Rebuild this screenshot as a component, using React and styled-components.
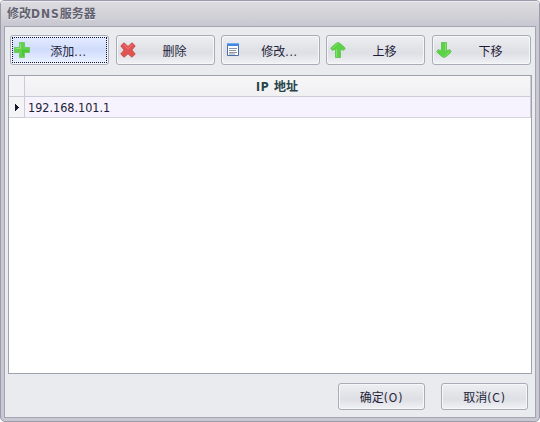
import React from "react";
import styled, { createGlobalStyle } from "styled-components";

const GlobalStyle = createGlobalStyle`
  *, *::before, *::after { box-sizing: border-box; }
  body {
    margin: 0;
    overflow: hidden;
    background: #fff;
    color: #1e1e38;
    font: 12px/16px "DejaVu Sans Condensed", "Noto Sans CJK SC", sans-serif;
  }
`;

const Dialog = styled.div`
  width: 540px;
  height: 422px;
  display: flex;
  flex-direction: column;
  border: 1px solid #9c9ba9;
  border-radius: 4px 4px 5px 5px;
  background: #c8c7d2;
  padding: 0 3px 3px;
`;

const TitleBar = styled.header`
  height: 25px;
  flex: none;
  margin: 0 -3px;
  padding: 5px 6px 0;
  border-radius: 3px 3px 0 0;
  background: linear-gradient(#dddde1, #d3d3d8 50%, #c8c7d2);
  box-shadow: inset 0 1px #ececf0;
  color: #62616f;
  font-weight: bold;
  text-shadow: 0 1px #e8e8ed;
  white-space: nowrap;
`;

const Latin = styled.span`
  letter-spacing: ${(p) => p.$spacing}px;
`;

const Client = styled.main`
  flex: 1;
  display: flex;
  flex-direction: column;
  border: 1px solid #a5a4b1;
  background: #eaebef;
  padding: 8px 3px 7px;
`;

const Toolbar = styled.div`
  display: grid;
  grid-template-columns: 106px 105px 105px 106px 99px;
  padding-left: 2px;
  margin-bottom: 10px;
`;

const Button = styled.button`
  width: ${(p) => p.$width}px;
  height: ${(p) => p.$height}px;
  padding: 1px;
  border: 1px solid #a9abb6;
  border-radius: 3px;
  background: ${(p) =>
    p.$focused
      ? "linear-gradient(#e6edff, #d0dcfb 48%, #d9e3ff 65%, #edf3ff)"
      : "linear-gradient(#eeeff2, #e1e2e7 48%, #dfe0e6 62%, #f1f2f5)"};
  box-shadow: inset 0 0 0 1px #f6f7f9;
  color: inherit;
  font: inherit;
`;

const ButtonContent = styled.span`
  width: 100%;
  height: 100%;
  display: flex;
  align-items: center;
  border: 1px dotted ${(p) => (p.$focused ? "#101035" : "transparent")};
`;

const Caption = styled.span`
  flex: 1;
  text-align: center;
  white-space: nowrap;
  padding: 4px 1px 0 0;
`;

const Icon = styled.svg`
  width: 16px;
  height: 16px;
  flex: none;
  margin-left: 1px;
  margin-right: 2px;
`;

const Grid = styled.div`
  height: 299px;
  border: 1px solid #a0a1ae;
  background: #fff;
`;

const GridRow = styled.div`
  display: grid;
  grid-template-columns: 16px 1fr;
  grid-template-rows: 21px;
  height: 21px;
  border-right: 1px solid #cbccd6;
`;

const Indicator = styled.div`
  display: flex;
  align-items: center;
  padding-left: 6px;
  border-right: 1px solid #cbccd6;
  border-bottom: 1px solid #cbccd6;
  background: #f4f4f6;
`;

const Arrow = styled.svg`
  width: 4px;
  height: 7px;
`;

const HeaderCell = styled.div`
  border-bottom: 1px solid #cbccd6;
  background: linear-gradient(#f7f7f8, #f0f0f3);
  color: #254548;
  font-weight: bold;
  text-align: center;
  line-height: 20px;
  padding: 1px 1px 0 0;
`;

const Cell = styled.div`
  border-bottom: 1px solid #d5d5de;
  background: #f6f3fe;
  padding: 1px 3px 0;
  line-height: 20px;
  font-size: 12.5px;
`;

const Footer = styled.footer`
  display: flex;
  justify-content: flex-end;
  gap: 16px;
  padding: 9px 4px 0 0;
`;

const FooterCaption = styled.span`
  display: block;
  padding-top: 2px;
`;

const AddIcon = () => (
  <Icon viewBox="0 0 16 16">
    <path d="M5.5.5h5v5h5v5h-5v5h-5v-5h-5v-5h5z" fill="#5fd048" stroke="#6fca5f" strokeLinejoin="round" />
    <path d="M6.5 1.5v5h-5" fill="none" stroke="#8be578" />
    <path d="M8 8h7v2H8zM8 8h2v6H8z" fill="#4fc638" />
  </Icon>
);

const DeleteIcon = () => (
  <Icon viewBox="0 0 16 16">
    <path
      d="M4 .8 8 4.6 12 .8l3.2 3.1L11.8 8l3.4 4-3.2 3.2-4-3.5-4 3.5L.8 12l3.4-4L.8 3.9z"
      fill="#e05452"
      stroke="#c94a4b"
      strokeLinejoin="round"
    />
    <path d="m3.8 2.6 4.2 4 4.2-4" fill="none" stroke="#ee827d" />
  </Icon>
);

const EditIcon = () => (
  <Icon viewBox="0 0 16 16">
    <path d="M2.5 1.5h11v12h-11z" fill="#fbfcfe" stroke="#4c6fa8" />
    <path d="M2 1h12v3H2z" fill="#4386e0" />
    <path d="M2 1.5h12" stroke="#75adf3" />
    <path d="M4 6.5h8M4 8.5h7M4 10.5h8M4 12h6" stroke="#8c96a8" />
  </Icon>
);

const ArrowIcon = ({ down }) => (
  <Icon viewBox="0 0 16 16">
    <g transform={down ? "rotate(180 8 8)" : undefined}>
      <path
        d="M8 .6 10 1.4 15.2 6 14 8.2 10.5 7.4v8.1h-5V7.4L2 8.2.8 6 6 1.4z"
        fill="#5bd344"
        stroke="#69c659"
        strokeLinejoin="round"
      />
      <path d="M6.5 7v8M7.5 1.8 2.5 6.4" fill="none" stroke="#83e170" />
    </g>
  </Icon>
);

const actions = [
  { label: "添加", suffix: "...", icon: <AddIcon />, focused: true },
  { label: "删除", icon: <DeleteIcon /> },
  { label: "修改", suffix: "...", icon: <EditIcon /> },
  { label: "上移", icon: <ArrowIcon /> },
  { label: "下移", icon: <ArrowIcon down /> },
];

export default function App() {
  return (
    <>
      <GlobalStyle />
      <Dialog>
        <TitleBar>
          修改<Latin $spacing={1}>DNS</Latin>服务器
        </TitleBar>
        <Client>
          <Toolbar>
            {actions.map(({ label, suffix, icon, focused }) => (
              <Button key={label} $width={99} $height={30} $focused={focused}>
                <ButtonContent $focused={focused}>
                  {icon}
                  <Caption>
                    {label}
                    {suffix && <Latin $spacing={0.7}>{suffix}</Latin>}
                  </Caption>
                </ButtonContent>
              </Button>
            ))}
          </Toolbar>
          <Grid>
            <GridRow>
              <Indicator />
              <HeaderCell>
                <Latin $spacing={0.7}>IP </Latin>地址
              </HeaderCell>
            </GridRow>
            <GridRow>
              <Indicator>
                <Arrow viewBox="0 0 4 7">
                  <path d="M0 0h1v1h1v1h1v1h1v1H3v1H2v1H1v1H0z" fill="#17172f" />
                </Arrow>
              </Indicator>
              <Cell>192.168.101.1</Cell>
            </GridRow>
          </Grid>
          <Footer>
            <Button $width={87} $height={27}>
              <FooterCaption>确定<Latin $spacing={0.8}>(O)</Latin></FooterCaption>
            </Button>
            <Button $width={87} $height={27}>
              <FooterCaption>取消<Latin $spacing={0.8}>(C)</Latin></FooterCaption>
            </Button>
          </Footer>
        </Client>
      </Dialog>
    </>
  );
}
